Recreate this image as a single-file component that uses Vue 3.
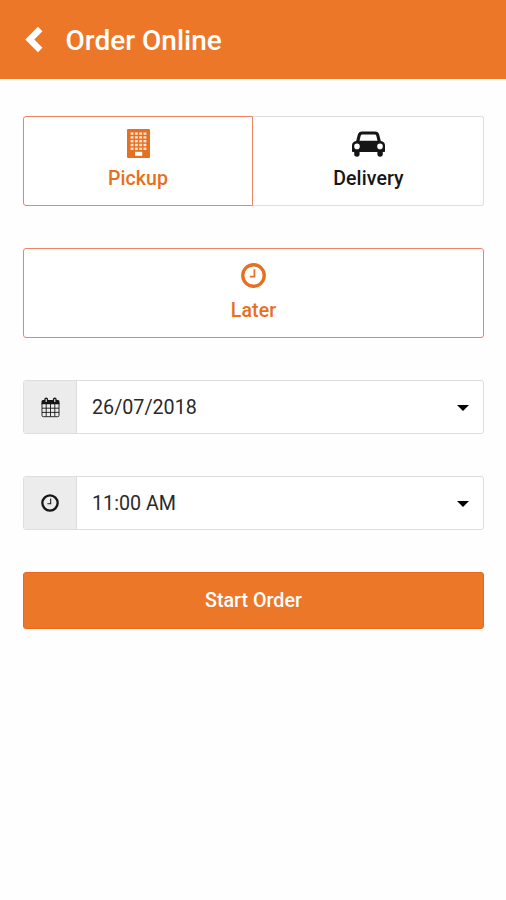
<script setup>
import { ref } from 'vue'

const mode = ref('pickup')
const fields = [
  { icon: 'calendar', value: '26/07/2018' },
  { icon: 'clock', value: '11:00 AM' },
]
const columns = [3.6, 7.9, 12.2, 16.5]
const rows = [3.4, 7.2, 11, 14.8, 18.6]
</script>

<template>
  <div class="screen">
    <header class="bar">
      <svg class="back" viewBox="0 0 18 27">
        <path d="M15.2 3 4.8 13.5 15.2 24" fill="none" stroke="currentColor" stroke-width="6.4" />
      </svg>
      <h1 class="title">Order Online</h1>
    </header>

    <main class="content">
      <div class="tabs">
        <button class="tab first" :class="{ active: mode === 'pickup' }" @click="mode = 'pickup'">
          <svg class="building" viewBox="0 0 23 29">
            <rect width="23" height="29" rx="1" fill="currentColor" />
            <g fill="#fff">
              <template v-for="y in rows" :key="y">
                <rect v-for="x in columns" :key="x" :x="x" :y="y" width="2.9" height="2.4" fill-opacity="0.8" />
              </template>
              <rect x="8" y="22.8" width="7.2" height="4" />
            </g>
          </svg>
          <span class="label">Pickup</span>
        </button>
        <button class="tab last" :class="{ active: mode === 'delivery' }" @click="mode = 'delivery'">
          <svg class="car" viewBox="0 0 33 26">
            <path
              fill="currentColor"
              fill-rule="evenodd"
              d="M10 0.5H23Q26.3 0.5 27.2 3.7L28.8 10Q33 10.6 33 14.5V20.2Q33 21 32.2 21H30.8V23A2.6 2.6 0 0 1 25.4 23V21H7.6V23A2.6 2.6 0 0 1 2.2 23V21H0.8Q0 21 0 20.2V14.5Q0 10.6 4.2 10L5.8 3.7Q6.7 0.5 10 0.5ZM10.2 3.4Q9.1 3.4 8.7 4.7L7.5 9.8H25.5L24.3 4.7Q23.9 3.4 22.8 3.4ZM5 12.6A2.8 2.8 0 1 0 5 18.2A2.8 2.8 0 1 0 5 12.6ZM28 12.6A2.8 2.8 0 1 0 28 18.2A2.8 2.8 0 1 0 28 12.6Z"
            />
          </svg>
          <span class="label">Delivery</span>
        </button>
      </div>

      <button class="later">
        <svg class="clock" viewBox="0 0 24 24" fill="none" stroke="currentColor">
          <circle cx="12" cy="12" r="10.3" stroke-width="3.2" />
          <path d="M12.9 6V13H8.5" stroke-width="1.7" />
        </svg>
        <span class="label">Later</span>
      </button>

      <div v-for="field in fields" :key="field.icon" class="field">
        <span class="addon">
          <svg v-if="field.icon === 'calendar'" class="calendar" viewBox="0 0 19 21">
            <path
              d="M1 6V18.5Q1 19.7 2.2 19.7H16.8Q18 19.7 18 18.5V6M1 11.2H18M1 15.4H18M5.2 7V19.5M9.5 7V19.5M13.8 7V19.5"
              fill="none" stroke="currentColor" stroke-width="0.9"
            />
            <path
              d="M.5 7.3V4.5Q.5 3 2 3H3.3V2.4Q3.3.5 5.2.5T7.1 2.4V3H11.9V2.4Q11.9.5 13.8.5T15.7 2.4V3H17Q18.5 3 18.5 4.5V7.3Z"
              fill="currentColor"
            />
            <path d="M5.2 2V5M13.8 2V5" stroke="#ececec" stroke-width="1.1" />
          </svg>
          <svg v-else class="small-clock" viewBox="0 0 24 24" fill="none" stroke="currentColor">
            <circle cx="12" cy="12" r="10.2" stroke-width="3.1" />
            <path d="M12.9 6V13H8.5" stroke-width="1.4" />
          </svg>
        </span>
        <span class="value">{{ field.value }}</span>
        <svg class="caret" viewBox="0 0 12 6"><path d="M0 0H12L6 6Z" fill="#000" /></svg>
      </div>

      <button class="start">Start Order</button>
    </main>
  </div>
</template>

<style>
body {
  background: #fefefe;
}
</style>

<style scoped>
.screen {
  min-height: 900px;
  font-family: Roboto, "Liberation Sans", sans-serif;
  color: #161616;
}
svg {
  display: block;
  flex: none;
}
button {
  box-sizing: border-box;
  font: inherit;
  color: inherit;
  padding: 0;
  margin: 0;
}
.bar {
  box-sizing: border-box;
  height: 79px;
  padding: 0 25px;
  display: flex;
  align-items: center;
  gap: 22.5px;
  background: #ec7728;
  color: #fff;
}
.back {
  width: 18px;
  height: 27px;
  margin-top: -1px;
}
.title {
  margin: 2px 0 0;
  font-size: 28px;
  line-height: 32px;
  font-weight: 500;
}
.content {
  padding: 37px 22px 0 23px;
}
.tabs {
  display: grid;
  grid-template-columns: 230px 1fr;
  height: 90px;
}
.tab,
.later {
  display: flex;
  flex-direction: column;
  align-items: center;
  background: #fff;
  border: 1px solid #dedede;
  font-size: 19.5px;
  font-weight: 500;
}
.first {
  border-radius: 3px 0 0 3px;
}
.last {
  padding-left: 1px;
  border-left: 0;
  border-radius: 0 3px 3px 0;
}
.tab.active,
.later {
  border: 1px solid #ee8464;
  color: #e57021;
}
.label {
  line-height: 24px;
  letter-spacing: 0.1px;
}
.building {
  width: 23px;
  height: 29px;
  margin: 12px 0 9px;
}
.car {
  width: 33px;
  height: 26px;
  margin: 14px 0 10px;
}
.later {
  width: 100%;
  height: 90px;
  margin-top: 42px;
  border-radius: 3px;
}
.clock {
  width: 25px;
  height: 25px;
  margin: 14px 0 11px;
}
.field {
  box-sizing: border-box;
  height: 54px;
  margin-top: 42px;
  display: flex;
  align-items: center;
  background: #fff;
  border: 1px solid #dedede;
  border-radius: 3px;
  overflow: hidden;
}
.addon {
  box-sizing: border-box;
  width: 53px;
  height: 100%;
  display: flex;
  align-items: center;
  justify-content: center;
  background: #ececec;
  border-right: 1px solid #dedede;
}
.calendar {
  width: 19px;
  height: 21px;
}
.small-clock {
  width: 18px;
  height: 18px;
}
.value {
  flex: 1;
  padding-left: 15px;
  font-size: 19.7px;
  color: #2a2a2a;
}
.caret {
  width: 12px;
  height: 6px;
  margin: 2px 14px 0 0;
}
.start {
  width: 100%;
  height: 57px;
  margin-top: 42px;
  padding-bottom: 1px;
  background: #ec7728;
  border: 1px solid #e9681e;
  border-radius: 3px;
  color: #fff;
  font-size: 19.7px;
  font-weight: 500;
}
</style>
